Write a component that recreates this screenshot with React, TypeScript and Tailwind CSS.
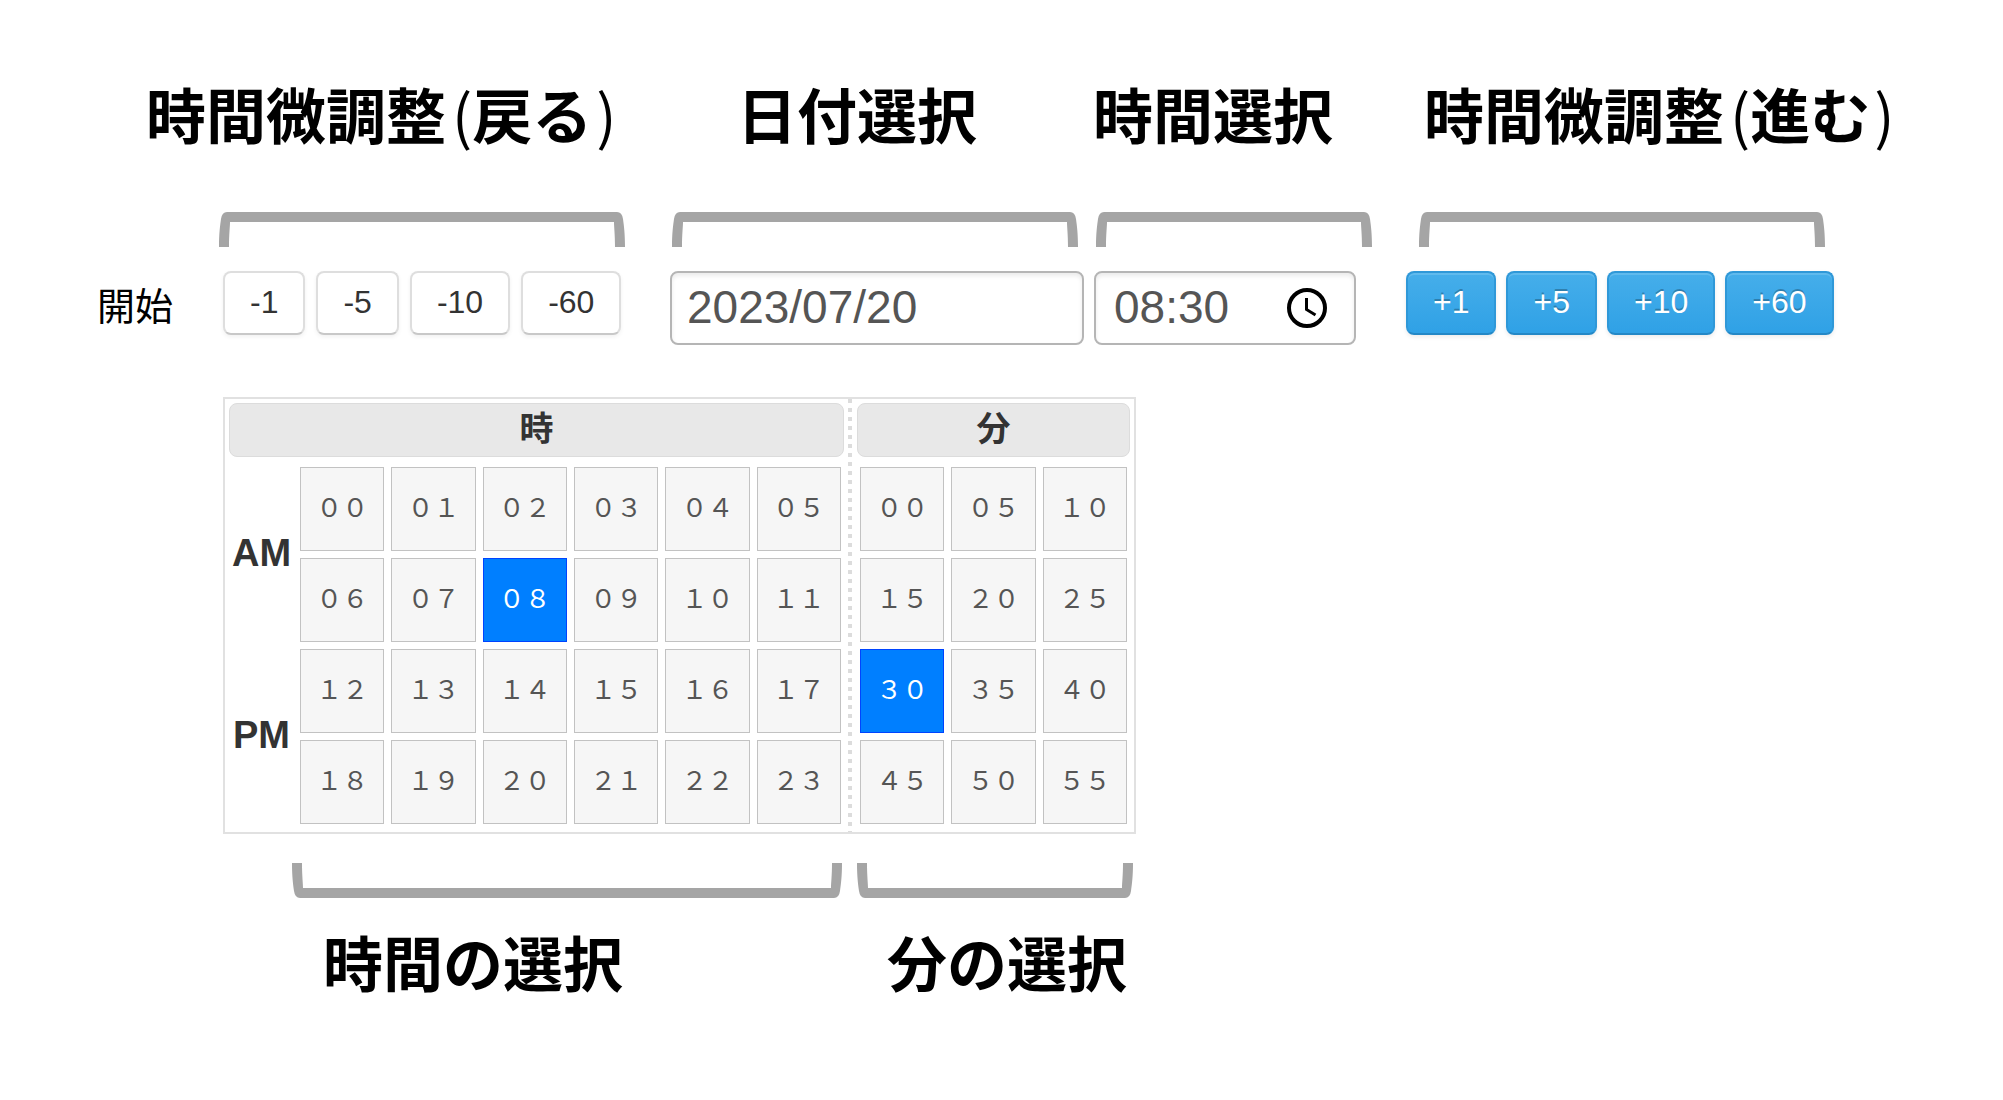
import React, { useState } from "react";

const HOURS = Array.from({ length: 24 }, (_, i) => i);
const MINUTES = Array.from({ length: 12 }, (_, i) => i * 5);

const pad = (n: number) => String(n).padStart(2, "0");

/** Two digits in full-width form, e.g. 8 -> "08". */
const wide = (n: number) =>
  pad(n).replace(/\d/g, (d) => String.fromCharCode(0xff10 + Number(d)));

function Bracket({ width, flip = false }: { width: number; flip?: boolean }) {
  const w = width;
  return (
    <svg
      aria-hidden="true"
      width={w}
      height={35}
      viewBox={`0 0 ${w} 35`}
      className={flip ? "block shrink-0 -scale-y-100" : "block shrink-0"}
    >
      <path
        fill="#a5a5a5"
        d={`M0 35C0 22 1 14 2 7Q3 0 8 0H${w - 8}Q${w - 3} 0 ${w - 2} 7C${w - 1} 14 ${w} 22 ${w} 35H${w - 10}C${w - 10} 22 ${w - 11} 15 ${w - 11} 10H11C11 15 10 22 10 35Z`}
      />
    </svg>
  );
}

function Caption({ children, note }: { children: React.ReactNode; note?: string }) {
  return (
    <h2 className="font-['Noto_Sans_CJK_JP',sans-serif] text-[60px] leading-[60px] font-bold whitespace-nowrap text-black">
      {children}
      {note && (
        <>
          <span className="pl-1.5 font-normal">(</span>
          {note}
          <span className="pl-1 font-normal">)</span>
        </>
      )}
    </h2>
  );
}

function Cell({
  value,
  selected,
  onSelect,
}: {
  value: number;
  selected: boolean;
  onSelect: (v: number) => void;
}) {
  return (
    <button
      type="button"
      aria-pressed={selected}
      onClick={() => onSelect(value)}
      className={
        selected
          ? "h-[84px] border border-[#0044ff] bg-[#007fff] pb-[3px] text-[26px] leading-8 text-white"
          : "h-[84px] border border-[#c2c2c2] bg-[#f6f6f6] pb-[3px] text-[26px] leading-8 text-[#555]"
      }
    >
      {wide(value)}
    </button>
  );
}

const headClass =
  "flex h-[54px] items-center justify-center rounded-lg border border-[#dcdcdc] bg-[#e8e8e8] pb-0.5 text-[34px] leading-10 font-bold text-[#333]";

export default function App() {
  const [total, setTotal] = useState(8 * 60 + 30);
  const [date, setDate] = useState("2023/07/20");
  const hour = Math.floor(total / 60);
  const minute = total % 60;
  const shift = (d: number) => setTotal((t) => (t + d + 1440) % 1440);

  return (
    <main className="min-h-screen bg-white pt-[83px] pb-16 font-['Liberation_Sans','Noto_Sans_CJK_JP',sans-serif]">
      <div className="grid grid-cols-[591px_356px_331px_auto] pl-[146px]">
        <Caption note="戻る">時間微調整</Caption>
        <Caption>日付選択</Caption>
        <Caption>時間選択</Caption>
        <Caption note="進む">時間微調整</Caption>
      </div>

      <div className="mt-[69px] flex pl-[219px]">
        <Bracket width={406} />
        <div className="ml-[47px] flex gap-[18px]">
          <Bracket width={406} />
          <Bracket width={276} />
        </div>
        <div className="ml-[47px]">
          <Bracket width={406} />
        </div>
      </div>

      <div className="mt-6 flex items-start pl-[97px]">
        <label
          htmlFor="start-date"
          className="w-[126px] text-[38px] leading-[72px] whitespace-nowrap text-black"
        >
          開始
        </label>
        <div className="flex w-[447px] gap-[11px]">
          {[1, 5, 10, 60].map((n) => (
            <button
              key={n}
              type="button"
              onClick={() => shift(-n)}
              className="h-16 rounded-lg border-2 border-[#dedede] border-b-[#c8c8c8] bg-white px-[25px] pb-0.5 text-[32px] text-[#333] shadow-[0_2px_4px_rgba(0,0,0,0.06)]"
            >
              -{n}
            </button>
          ))}
        </div>
        <input
          id="start-date"
          type="text"
          value={date}
          onChange={(e) => setDate(e.target.value)}
          className="h-[74px] w-[414px] rounded-lg border-2 border-[#b5b5b5] bg-white px-[15px] pb-0.5 text-[46px] text-[#555] shadow-[inset_0_3px_4px_rgba(0,0,0,0.08)] outline-none"
        />
        <div className="ml-2.5 flex h-[74px] w-[262px] items-center rounded-lg border-2 border-[#b5b5b5] bg-white pr-[26px] pl-[18px] shadow-[inset_0_3px_4px_rgba(0,0,0,0.08)]">
          <input
            type="text"
            aria-label="時間選択"
            readOnly
            value={`${pad(hour)}:${pad(minute)}`}
            className="w-full min-w-0 bg-transparent pb-0.5 text-[46px] text-[#555] outline-none"
          />
          <button type="button" aria-label="時計" className="shrink-0">
            <svg width="42" height="42" viewBox="0 0 42 42" fill="none" stroke="#000">
              <circle cx="21" cy="21" r="18" strokeWidth="4" />
              <path d="M20.5 11V22.5L29.500 28" strokeWidth="3" />
            </svg>
          </button>
        </div>
        <div className="ml-[50px] flex gap-2.5">
          {[1, 5, 10, 60].map((n) => (
            <button
              key={n}
              type="button"
              onClick={() => shift(n)}
              className="h-16 rounded-lg border-2 border-[#2f98d8] border-b-[#2488c6] bg-linear-to-b from-[#45aeea] to-[#2fa1e6] px-[25px] pb-0.5 text-[32px] text-white shadow-[inset_0_2px_0_rgba(255,255,255,0.15),0_2px_4px_rgba(0,0,0,0.08)] [text-shadow:0_-2px_0_rgba(0,0,0,0.25)]"
            >
              +{n}
            </button>
          ))}
        </div>
      </div>

      <div className="mt-[52px] ml-[223px] flex h-[437px] w-[913px] border-2 border-[#e1e1e1] bg-white">
        <section aria-label="時" className="w-[623px] px-1 pt-1">
          <h3 className={headClass}>時</h3>
          <div className="mt-2.5 flex pr-[3px]">
            <div className="grid w-[71px] grid-rows-2 gap-[7px] text-center text-[38px] font-bold text-[#333]">
              <span className="flex items-center justify-center pr-1.5 pb-0.5">AM</span>
              <span className="flex items-center justify-center pr-1.5 pb-0.5">PM</span>
            </div>
            <div className="grid grow grid-cols-6 gap-[7px]">
              {HOURS.map((h) => (
                <Cell
                  key={h}
                  value={h}
                  selected={h === hour}
                  onSelect={(v) => setTotal(v * 60 + minute)}
                />
              ))}
            </div>
          </div>
        </section>
        <div className="w-1 bg-[repeating-linear-gradient(#dcdcdc_0_4px,#fff_4px_9px)]" />
        <section aria-label="分" className="grow pt-1 pr-1 pl-[5px]">
          <h3 className={headClass}>分</h3>
          <div className="mx-[3px] mt-2.5 grid grid-cols-3 gap-[7px]">
            {MINUTES.map((m) => (
              <Cell
                key={m}
                value={m}
                selected={m === minute}
                onSelect={(v) => setTotal(hour * 60 + v)}
              />
            ))}
          </div>
        </section>
      </div>

      <div className="mt-[29px] flex gap-[15px] pl-[292px]">
        <Bracket width={550} flip />
        <Bracket width={276} flip />
      </div>
      <div className="mt-[33px] grid grid-cols-[564px_auto] pl-[323px]">
        <Caption>時間の選択</Caption>
        <Caption>分の選択</Caption>
      </div>
    </main>
  );
}
